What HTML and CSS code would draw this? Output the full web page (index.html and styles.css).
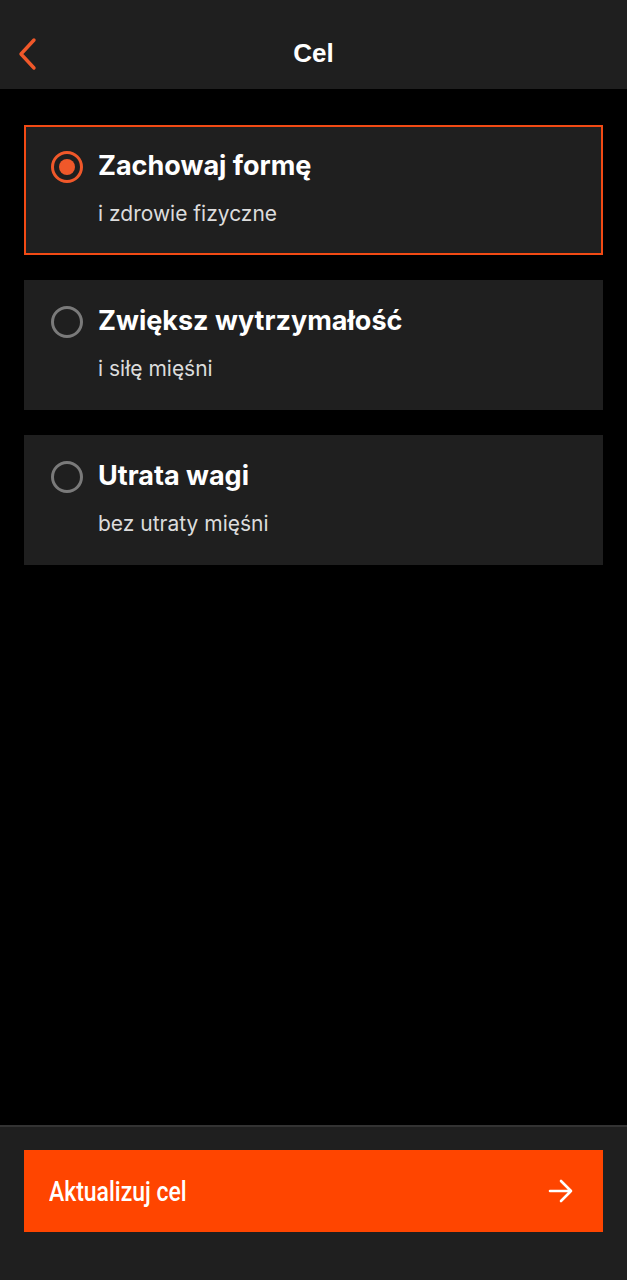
FILE: index.html
```html
<!DOCTYPE html>
<html lang="pl">

<head>
    <meta charset="UTF-8">
    <meta name="viewport" content="width=device-width, initial-scale=1.0">
    <title>Cel</title>
    <link rel="stylesheet" href="styles.css">
</head>

<body>
    <div class="app">
        <header class="topbar">
            <button class="back" aria-label="Wstecz">
                <svg width="22" height="34" viewBox="0 0 22 34">
                    <path d="M17 3 L4 17 L17 31" fill="none" stroke="#f0582a" stroke-width="3.4" stroke-linecap="round" stroke-linejoin="round" />
                </svg>
            </button>
            <h1 class="title">Cel</h1>
        </header>

        <main class="options">
            <div class="option selected">
                <span class="radio"></span>
                <div class="option-text">
                    <div class="option-title">Zachowaj formę</div>
                    <div class="option-sub">i zdrowie fizyczne</div>
                </div>
            </div>
            <div class="option">
                <span class="radio"></span>
                <div class="option-text">
                    <div class="option-title">Zwiększ wytrzymałość</div>
                    <div class="option-sub">i siłę mięśni</div>
                </div>
            </div>
            <div class="option">
                <span class="radio"></span>
                <div class="option-text">
                    <div class="option-title">Utrata wagi</div>
                    <div class="option-sub">bez utraty mięśni</div>
                </div>
            </div>
        </main>

        <footer class="footer">
            <button class="update">
                <span class="update-label">Aktualizuj cel</span>
                <svg width="26" height="24" viewBox="0 0 26 24">
                    <path d="M2 12 H23 M13 2 L23 12 L13 22" fill="none" stroke="#fff" stroke-width="2.6" stroke-linecap="round" stroke-linejoin="round" />
                </svg>
            </button>
        </footer>
    </div>
</body>

</html>
```

FILE: styles.css
```css
* {
    box-sizing: border-box;
}

body {
    margin: 0;
    background-color: #000;
    font-family: Inter, "Noto Sans", sans-serif;
    color: #fff;
}

.app {
    height: 1280px;
    display: flex;
    flex-direction: column;
}

.topbar {
    height: 89px;
    background-color: #1f1f1f;
    display: flex;
    align-items: center;
    justify-content: center;
    position: relative;
}

.back {
    position: absolute;
    left: 17px;
    top: 37px;
    background: none;
    border: none;
    padding: 0;
    display: flex;
}

.title {
    margin: 0;
    padding-top: 18px;
    font-family: "Liberation Sans", Arial, sans-serif;
    font-size: 26px;
    font-weight: bold;
}

.options {
    flex: 1;
    padding: 36px 24px 0;
    display: flex;
    flex-direction: column;
    gap: 25px;
}

.option {
    height: 130px;
    background-color: #1f1f1f;
    border: 2px solid transparent;
    display: flex;
    align-items: flex-start;
    padding: 21px 25px 0 25px;
    gap: 15px;
}

.option.selected {
    border-color: #f24a14;
}

.radio {
    width: 32px;
    height: 32px;
    border-radius: 50%;
    border: 3px solid #7a7a7a;
    margin-top: 3px;
    flex-shrink: 0;
    position: relative;
}

.option.selected .radio {
    border-color: #f0582a;
}

.option.selected .radio::after {
    content: "";
    position: absolute;
    left: 5px;
    top: 5px;
    width: 16px;
    height: 16px;
    border-radius: 50%;
    background-color: #f0582a;
}

.option-title {
    font-size: 27px;
    font-weight: 700;
    line-height: 36px;
}

.option-sub {
    margin-top: 17px;
    font-size: 21px;
    color: #dcdcdc;
    line-height: 26px;
}

.footer {
    height: 155px;
    background-color: #1f1f1f;
    border-top: 2px solid #333;
    padding: 23px 24px 0;
}

.update {
    width: 100%;
    height: 82px;
    background-color: #ff4500;
    border: none;
    color: #fff;
    display: flex;
    align-items: center;
    justify-content: space-between;
    padding: 0 29px 0 25px;
    font-family: Roboto, "Noto Sans", sans-serif;
    font-size: 28px;
    font-weight: 500;
    cursor: pointer;
}

.update-label {
    display: inline-block;
    transform: scaleX(0.82);
    transform-origin: left center;
}
```
